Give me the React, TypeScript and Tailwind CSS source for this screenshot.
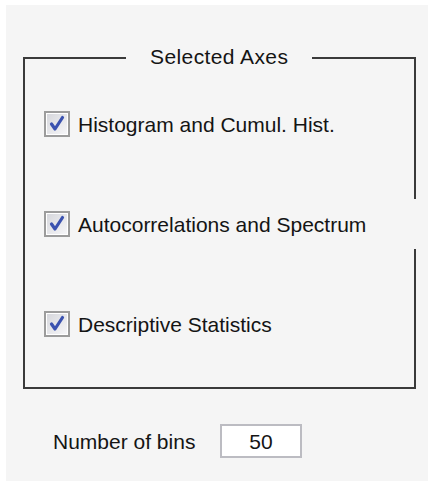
import React from 'react';

const font = { fontFamily: '"Liberation Sans", Arial, sans-serif' };

function CheckBox() {
  return (
    <svg width="26" height="26" viewBox="0 0 26 26" className="shrink-0">
      <defs>
        <linearGradient id="cbfill" x1="0" y1="0" x2="1" y2="1">
          <stop offset="0" stopColor="#d6d7dc" />
          <stop offset="1" stopColor="#f6f6f8" />
        </linearGradient>
      </defs>
      <rect x="1" y="1" width="24" height="24" fill="#ffffff" stroke="#9c9c9c" strokeWidth="2" />
      <rect x="3" y="3" width="20" height="20" fill="url(#cbfill)" />
      <path d="M7.5 13 L11 18 L18.5 6.5" fill="none" stroke="#3a52b0" strokeWidth="3.2" strokeLinecap="round" strokeLinejoin="round" />
    </svg>
  );
}

function Option({ label, wide }: { label: string; wide?: boolean }) {
  return (
    <div
      className={
        'flex h-[50px] items-center gap-2 bg-[#f5f5f5] pl-[19px] ' +
        (wide ? '-mr-[6px]' : '')
      }
    >
      <CheckBox />
      <span className="text-[21px] leading-none text-[#141414]">{label}</span>
    </div>
  );
}

export default function App() {
  return (
    <div className="h-[482px] w-[428px] bg-white pl-[6px] pt-[5px]" style={font}>
      <div className="h-[476px] w-[422px] bg-[#f5f5f5] pl-[17px] pt-[52px]">
        <div className="relative h-[332px] w-[393px] border-2 border-[#3a3a3a] pt-[40px]">
          <div className="absolute -top-[15px] left-[101px] bg-[#f5f5f5] px-[24px] text-[21px] leading-[26px] tracking-[0.4px] text-[#141414]">
            Selected Axes
          </div>
          <div className="flex flex-col gap-[50px]">
            <Option label="Histogram and Cumul. Hist." />
            <Option label="Autocorrelations and Spectrum" wide />
            <Option label="Descriptive Statistics" />
          </div>
        </div>
        <div className="mt-[35px] flex items-center pl-[30px]">
          <span className="w-[167px] text-[21px] leading-none text-[#141414]">Number of bins</span>
          <div className="flex h-[34px] w-[82px] items-center justify-center border-2 border-[#bcbcc2] bg-white text-[21px] leading-none text-[#141414]">
            50
          </div>
        </div>
      </div>
    </div>
  );
}
